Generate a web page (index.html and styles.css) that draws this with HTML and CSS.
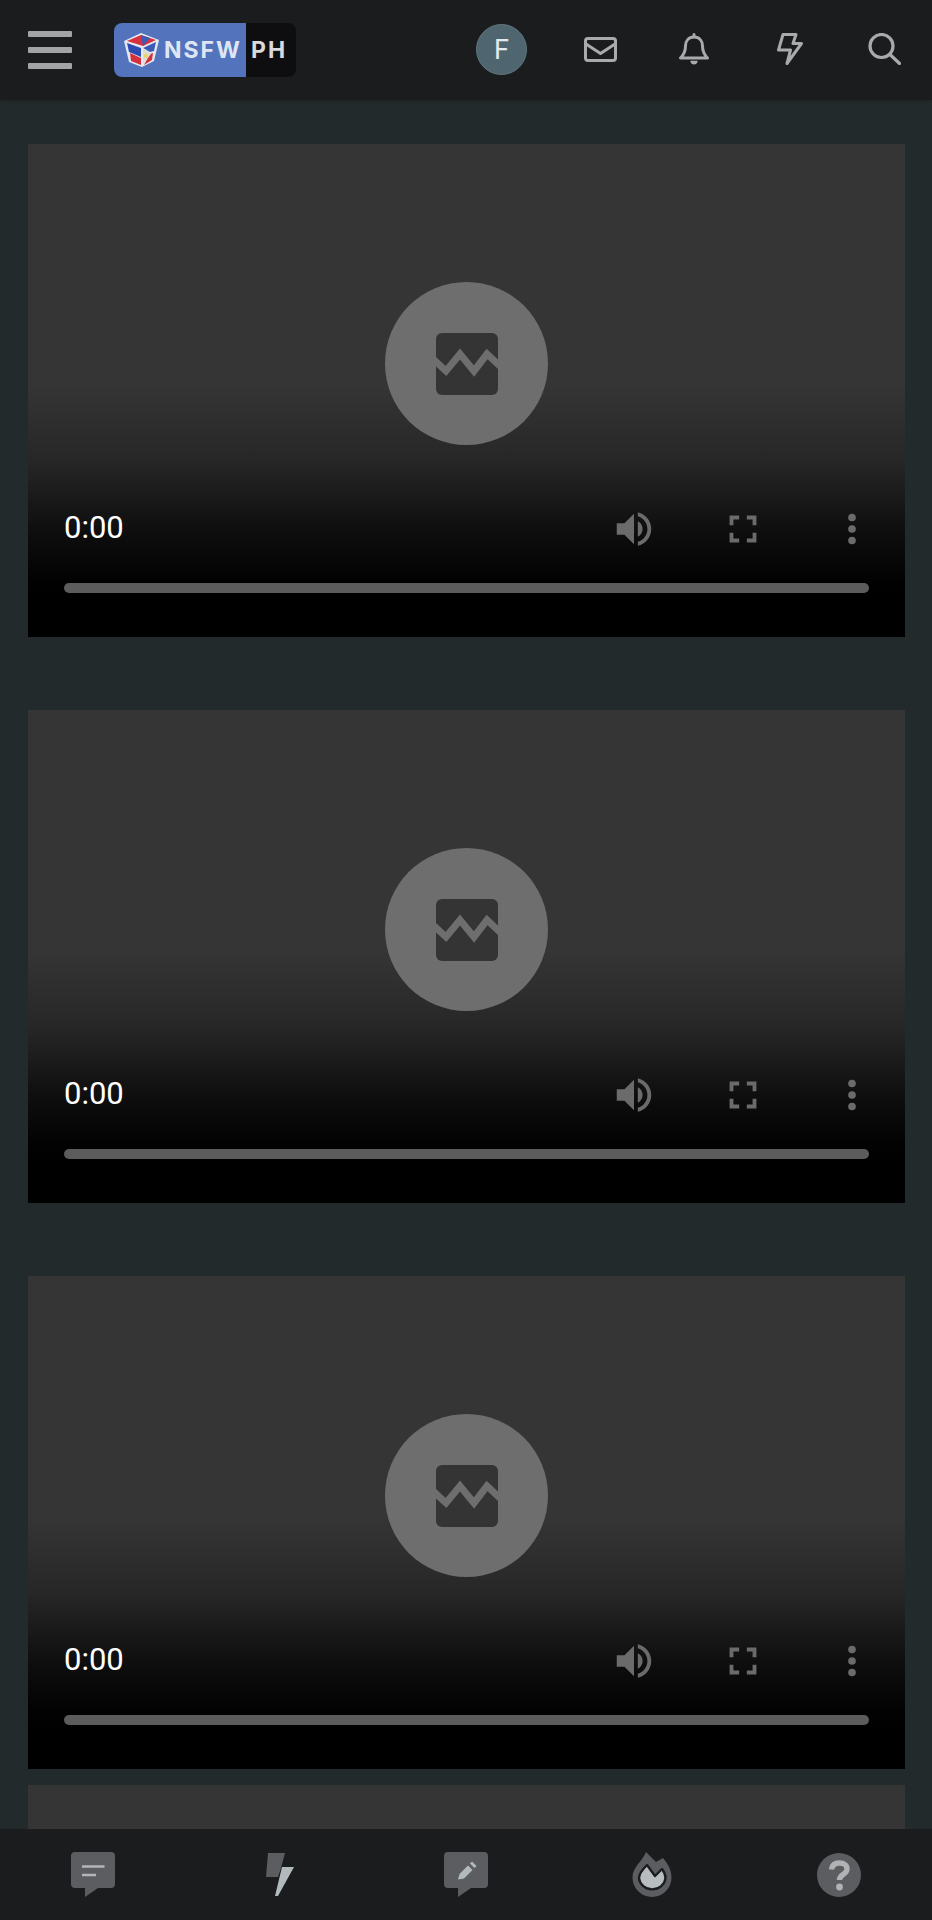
FILE: index.html
```html
<!DOCTYPE html>
<html lang="en">
<head>
<meta charset="utf-8">
<title>NSFW PH</title>
<link rel="stylesheet" href="styles.css">
</head>
<body>
<header class="topbar">
  <button class="burger" aria-label="Menu"><span></span><span></span><span></span></button>
  <div class="logo">
    <div class="logo-main">
      <svg class="logo-cube" viewBox="0 0 37 36">
        <path d="M18 1 36 8 31 29 19 35 6 30 1 9Z" fill="#e4e8ef"/>
        <path d="M18 3 33 8 20 14 4 9Z" fill="#d8303f"/>
        <path d="M18 3 27 6 20 14Z" fill="#3a5cb8"/>
        <path d="M4 11 18 16 18 25 6 20Z" fill="#2c4cb4"/>
        <path d="M7 21 18 26 18 33 8 29Z" fill="#d5303d"/>
        <path d="M20 16 33 10 31 19 27 20Z" fill="#3a5cb8"/>
        <path d="M21 33 29 28 30 21 27 22Z" fill="#d5303d"/>
        <path d="M20 16 28 22 20 32Z" fill="#dcdcd2"/>
        <circle cx="23" cy="24" r="2.2" fill="#e8d36a"/>
      </svg>
      <span class="logo-word">NSFW</span>
    </div>
    <span class="logo-tag">PH</span>
  </div>
  <nav class="top-actions">
    <div class="slot slot-avatar"><span class="avatar">F</span></div>
    <div class="slot">
      <svg class="ico-mail" viewBox="0 0 33 25" fill="none" stroke="#a9aaab" stroke-width="3" stroke-linejoin="round" stroke-linecap="round"><rect x="1.5" y="1.5" width="30" height="22" rx="2.5"/><path d="M2 7 16.500 16.500 31 7"/></svg>
    </div>
    <div class="slot">
      <svg class="ico-bell" viewBox="0 0 30 32" fill="none" stroke="#a9aaab" stroke-width="3" stroke-linejoin="round" stroke-linecap="round"><path d="M15 1.500v2.500M15 4c-5.500 0-8.500 4-8.500 9 0 6-2 9-5 12h27c-3-3-5-6-5-12 0-5-3-9-8.500-9Z"/><path d="M12 28.500h6c-.6 1.800-1.600 2.300-3 2.300s-2.400-.5-3-2.300Z" fill="#a9aaab" stroke-width="1.400"/></svg>
    </div>
    <div class="slot">
      <svg class="ico-bolt" viewBox="0 0 26 32" fill="none" stroke="#a9aaab" stroke-width="3" stroke-linejoin="round" stroke-linecap="round"><path d="M6 1.500h13l-3 9h8.500L10 30.500l3.500-13.500H1.500Z"/></svg>
    </div>
    <div class="slot">
      <svg class="ico-search" viewBox="0 0 33 32" fill="none" stroke="#a9aaab" stroke-width="3.200" stroke-linecap="round"><circle cx="13.500" cy="13" r="11.500"/><path d="M22 21.500 31.500 30.500"/></svg>
    </div>
  </nav>
</header>

<main class="feed">
  <article class="video">
    <div class="video-center"><div class="big-play"><svg class="broken" viewBox="0 0 62 62"><rect width="62" height="62" rx="6" fill="#343434"/><path d="M-3 26 10 38 24 21 38 38 51 21 65 34" fill="none" stroke="#6e6e6e" stroke-width="7"/></svg></div></div>
    <div class="controls">
      <div class="ctrl-row">
        <span class="time">0:00</span>
        <svg class="ctrl-ico" viewBox="0 0 24 24"><path d="M3 9v6h4l5 5V4L7 9H3zm13.500 3c0-1.770-1.020-3.290-2.500-4.030v8.050c1.480-.73 2.500-2.250 2.500-4.020zM14 3.230v2.060c2.890.86 5 3.540 5 6.710s-2.110 5.850-5 6.710v2.060c4.010-.91 7-4.490 7-8.770s-2.990-7.860-7-8.770z"/></svg>
        <svg class="ctrl-ico" viewBox="0 0 24 24"><path d="M7 14H5v5h5v-2H7v-3zm-2-4h2V7h3V5H5v5zm12 7h-3v2h5v-5h-2v3zM14 5v2h3v3h2V5h-5z"/></svg>
        <svg class="ctrl-ico" viewBox="0 0 24 24"><circle cx="12" cy="6" r="2"/><circle cx="12" cy="12" r="2"/><circle cx="12" cy="18" r="2"/></svg>
      </div>
      <div class="progress"></div>
    </div>
  </article>
  <article class="video">
    <div class="video-center"><div class="big-play"><svg class="broken" viewBox="0 0 62 62"><rect width="62" height="62" rx="6" fill="#343434"/><path d="M-3 26 10 38 24 21 38 38 51 21 65 34" fill="none" stroke="#6e6e6e" stroke-width="7"/></svg></div></div>
    <div class="controls">
      <div class="ctrl-row">
        <span class="time">0:00</span>
        <svg class="ctrl-ico" viewBox="0 0 24 24"><path d="M3 9v6h4l5 5V4L7 9H3zm13.500 3c0-1.770-1.020-3.290-2.500-4.030v8.050c1.480-.73 2.500-2.250 2.500-4.020zM14 3.230v2.060c2.890.86 5 3.540 5 6.710s-2.110 5.850-5 6.710v2.060c4.010-.91 7-4.490 7-8.770s-2.990-7.860-7-8.770z"/></svg>
        <svg class="ctrl-ico" viewBox="0 0 24 24"><path d="M7 14H5v5h5v-2H7v-3zm-2-4h2V7h3V5H5v5zm12 7h-3v2h5v-5h-2v3zM14 5v2h3v3h2V5h-5z"/></svg>
        <svg class="ctrl-ico" viewBox="0 0 24 24"><circle cx="12" cy="6" r="2"/><circle cx="12" cy="12" r="2"/><circle cx="12" cy="18" r="2"/></svg>
      </div>
      <div class="progress"></div>
    </div>
  </article>
  <article class="video video-last">
    <div class="video-center"><div class="big-play"><svg class="broken" viewBox="0 0 62 62"><rect width="62" height="62" rx="6" fill="#343434"/><path d="M-3 26 10 38 24 21 38 38 51 21 65 34" fill="none" stroke="#6e6e6e" stroke-width="7"/></svg></div></div>
    <div class="controls">
      <div class="ctrl-row">
        <span class="time">0:00</span>
        <svg class="ctrl-ico" viewBox="0 0 24 24"><path d="M3 9v6h4l5 5V4L7 9H3zm13.500 3c0-1.770-1.020-3.290-2.500-4.030v8.050c1.480-.73 2.500-2.250 2.500-4.020zM14 3.230v2.060c2.890.86 5 3.540 5 6.710s-2.110 5.850-5 6.710v2.060c4.010-.91 7-4.490 7-8.770s-2.990-7.860-7-8.770z"/></svg>
        <svg class="ctrl-ico" viewBox="0 0 24 24"><path d="M7 14H5v5h5v-2H7v-3zm-2-4h2V7h3V5H5v5zm12 7h-3v2h5v-5h-2v3zM14 5v2h3v3h2V5h-5z"/></svg>
        <svg class="ctrl-ico" viewBox="0 0 24 24"><circle cx="12" cy="6" r="2"/><circle cx="12" cy="12" r="2"/><circle cx="12" cy="18" r="2"/></svg>
      </div>
      <div class="progress"></div>
    </div>
  </article>
  <article class="video"></article>
</main>

<footer class="tabbar">
  <div class="tab">
    <svg class="tab-ico" viewBox="0 0 46 46"><path d="M5 0h36a4 4 0 0 1 4 4v28a4 4 0 0 1-4 4H28L15 45V36H5a4 4 0 0 1-4-4V4a4 4 0 0 1 4-4Z" fill="#5c5d60"/><path d="M12 14.500h22.500M12 23h14" stroke="#b3b5b7" stroke-width="2.600"/></svg>
  </div>
  <div class="tab">
    <svg class="tab-ico" viewBox="0 0 46 46"><path d="M11 1h17l-4 15-3 9H9Z" fill="#5c5d60"/><path d="M25 15h12L21 44h-3Z" fill="#b3babd"/></svg>
  </div>
  <div class="tab">
    <svg class="tab-ico" viewBox="0 0 46 46"><path d="M5 0h36a4 4 0 0 1 4 4v28a4 4 0 0 1-4 4H28L15 45V36H5a4 4 0 0 1-4-4V4a4 4 0 0 1 4-4Z" fill="#5c5d60"/><path d="M15 27.500 16.500 22 25 13.500 29.500 18 21 26.500Z" fill="#b3babd"/><path d="M27 11.500 29 9.500 33.500 14 31.500 16Z" fill="#b3babd"/></svg>
  </div>
  <div class="tab">
    <svg class="tab-ico" viewBox="0 0 40 46"><path d="M14 0 24 10 31 6C36 12 39.500 18 39.500 25.500A19.500 19.500 0 0 1 .5 25.500C.5 15 10 10 14 0Z" fill="#5c5d60"/><path d="M15 13 23 24 30 17C33 21 33.500 24 33.500 26A13.300 12.500 0 0 1 7 26C7 21 11 17 15 13Z" fill="#b8bebf" stroke="#1b1c1e" stroke-width="2.400" stroke-linejoin="round"/></svg>
  </div>
  <div class="tab">
    <svg class="tab-ico" viewBox="0 0 46 46"><circle cx="23" cy="23" r="22" fill="#5c5d60"/><path d="M15.500 17.500C16 13 19 11 23.500 11c4.500 0 7.500 2.500 7.500 6 0 5.500-7.500 5-7.500 11" fill="none" stroke="#b0b2b4" stroke-width="5.400"/><circle cx="23.500" cy="35" r="3.400" fill="#b0b2b4"/></svg>
  </div>
</footer>
</body>
</html>
```

FILE: styles.css
```css
* {
  box-sizing: border-box;
}

html,
body {
  margin: 0;
  height: 1920px;
  overflow: hidden;
}

body {
  display: flex;
  flex-direction: column;
  background: #232a2b;
  font-family: Roboto, "Liberation Sans", sans-serif;
}

.topbar {
  flex: 0 0 100px;
  display: flex;
  align-items: center;
  padding-left: 28px;
  background: #1b1c1e;
  box-shadow: 0 1px 4px rgba(0, 0, 0, 0.2);
  position: relative;
  z-index: 2;
}

.burger {
  width: 44px;
  display: flex;
  flex-direction: column;
  gap: 10px;
  padding: 0;
  border: 0;
  background: none;
}

.burger span {
  display: block;
  height: 6px;
  border-radius: 1px;
  background: #a3a4a5;
}

.logo {
  display: flex;
  align-items: stretch;
  height: 54px;
  margin-left: 42px;
  border-radius: 8px;
  overflow: hidden;
  background: #0e0e10;
}

.logo-main {
  display: flex;
  align-items: center;
  width: 132px;
  padding-left: 9px;
  background: #5373bd;
}

.logo-cube {
  width: 37px;
  height: 36px;
}

.logo-word {
  margin-left: 4px;
  font-family: Inter, sans-serif;
  font-weight: 700;
  font-size: 23px;
  letter-spacing: 2px;
  color: #dfe6f3;
}

.logo-tag {
  display: flex;
  align-items: center;
  width: 50px;
  padding-left: 5px;
  font-family: Inter, sans-serif;
  font-weight: 700;
  font-size: 23px;
  letter-spacing: 2px;
  color: #d9dadc;
}

.top-actions {
  margin-left: auto;
  display: flex;
  align-items: center;
}

.slot {
  width: 95px;
  display: flex;
  justify-content: center;
  align-items: center;
  margin-top: -2px;
}

.slot-avatar {
  padding-right: 6px;
  margin-top: -1px;
}

.avatar {
  width: 51px;
  height: 51px;
  display: flex;
  align-items: center;
  justify-content: center;
  border-radius: 50%;
  border: 1px solid #61767f;
  background: #4f6670;
  color: #e4eaec;
  font-size: 27px;
}

.ico-mail {
  width: 33px;
  height: 25px;
  margin-left: 2px;
}

.ico-bell {
  width: 30px;
  height: 32px;
  margin-right: 1px;
}

.ico-bolt {
  width: 26px;
  height: 32px;
}

.ico-search {
  width: 33px;
  height: 32px;
}

.feed {
  flex: 1;
  min-height: 0;
  overflow: hidden;
  display: flex;
  flex-direction: column;
  gap: 73px;
  padding: 44px 27px 0 28px;
}

.video {
  flex: 0 0 493px;
  position: relative;
  background: linear-gradient(
    to bottom,
    #353535 0,
    #353535 240px,
    #272727 316px,
    #1b1b1b 350px,
    #0d0d0d 390px,
    #020202 436px,
    #000 455px
  );
}

.video-last {
  margin-bottom: -57px;
}

.video:last-child {
  background: #353535;
}

.video-center {
  position: absolute;
  inset: 0 0 54px;
  display: flex;
  align-items: center;
  justify-content: center;
}

.big-play {
  width: 163px;
  height: 163px;
  display: flex;
  align-items: center;
  justify-content: center;
  border-radius: 50%;
  background: #6e6e6e;
}

.broken {
  width: 62px;
  height: 62px;
  overflow: hidden;
}

.controls {
  position: absolute;
  inset: 0;
  display: flex;
  flex-direction: column;
  justify-content: flex-end;
  gap: 30px;
  padding: 0 36px 44px;
}

.ctrl-row {
  display: flex;
  align-items: center;
  gap: 63px;
  height: 46px;
  margin-right: -6px;
  margin-bottom: 1px;
}

.time {
  margin-right: auto;
  margin-bottom: 3px;
  font-size: 31px;
  color: #fff;
}

.ctrl-ico {
  width: 46px;
  height: 46px;
  fill: #6b6b6b;
}

.progress {
  height: 10px;
  border-radius: 5px;
  background: #5c5c5c;
}

.tabbar {
  flex: 0 0 91px;
  display: flex;
  align-items: center;
  background: #1b1c1e;
  position: relative;
  z-index: 2;
}

.tab {
  flex: 1;
  display: flex;
  justify-content: center;
}

.tab-ico {
  height: 46px;
  width: auto;
  max-width: 46px;
  flex: none;
}
```
